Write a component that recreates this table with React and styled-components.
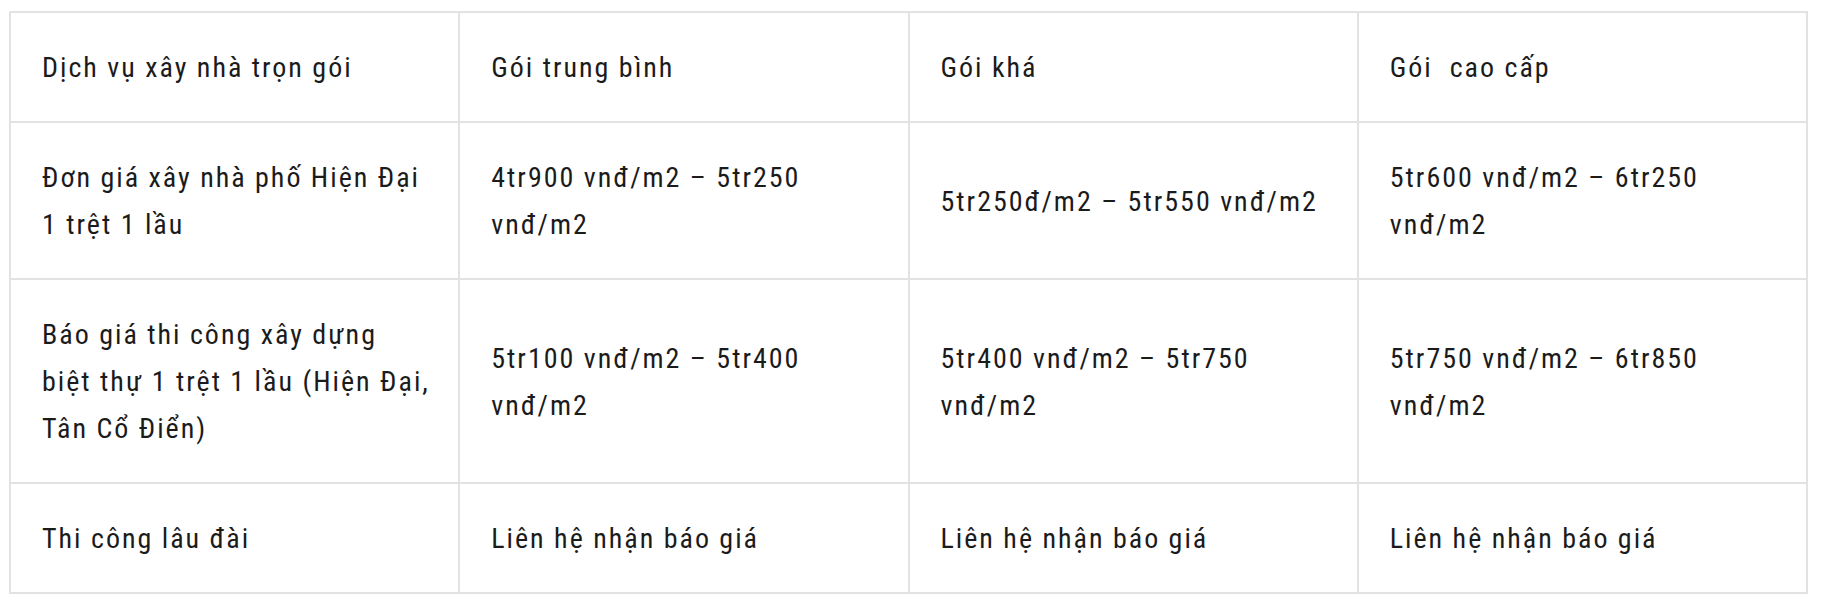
import React from "react";
import styled, { createGlobalStyle } from "styled-components";

const rows = [
  ["Dịch vụ xây nhà trọn gói", "Gói trung bình", "Gói khá", "Gói  cao cấp"],
  [
    "Đơn giá xây nhà phố Hiện Đại 1 trệt 1 lầu",
    "4tr900 vnđ/m2 – 5tr250 vnđ/m2",
    "5tr250đ/m2 – 5tr550 vnđ/m2",
    "5tr600 vnđ/m2 – 6tr250 vnđ/m2",
  ],
  [
    "Báo giá thi công xây dựng biệt thự 1 trệt 1 lầu (Hiện Đại, Tân Cổ Điển)",
    "5tr100 vnđ/m2 – 5tr400 vnđ/m2",
    "5tr400 vnđ/m2 – 5tr750 vnđ/m2",
    "5tr750 vnđ/m2 – 6tr850 vnđ/m2",
  ],
  ["Thi công lâu đài", "Liên hệ nhận báo giá", "Liên hệ nhận báo giá", "Liên hệ nhận báo giá"],
];

export default function App() {
  return (
    <>
      <GlobalStyle />
      <Page>
        <Table>
          <tbody>
            {rows.map((row, i) => (
              <tr key={i}>
                {row.map((cell, j) => (
                  <Cell key={j}>{cell}</Cell>
                ))}
              </tr>
            ))}
          </tbody>
        </Table>
      </Page>
    </>
  );
}

//styles

const GlobalStyle = createGlobalStyle`
  body {
    margin: 0;
    background: #ffffff;
  }
`;

const Page = styled.div`
  padding: 11px 0 0 9px;
  width: 1825px;
  box-sizing: border-box;
`;

const Table = styled.table`
  width: 1799px;
  border-collapse: collapse;
  table-layout: fixed;
  border: 2px solid #e2e2e2;
`;

const Cell = styled.td`
  border: 2px solid #e2e2e2;
  padding: 31px 26px 30px 31px;
  vertical-align: middle;
  font-family: "Roboto Condensed", Roboto, "Noto Sans", sans-serif;
  font-stretch: 88%;
  font-size: 28px;
  letter-spacing: 2px;
  line-height: 47px;
  color: #1b1b1b;
  white-space: pre-wrap;
`;
